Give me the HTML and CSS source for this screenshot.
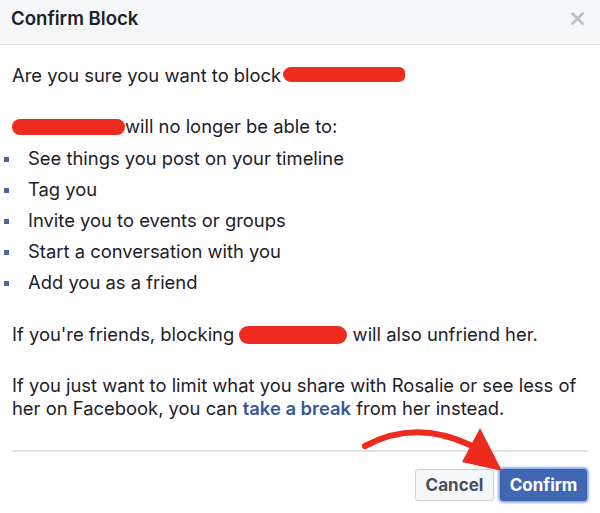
FILE: index.html
```html
<!DOCTYPE html>
<html>
<head>
<meta charset="utf-8">
<link rel="stylesheet" href="styles.css">
</head>
<body>
<div class="dialog">
  <div class="header">
    <span class="title">Confirm Block</span>
    <svg class="close" width="13" height="13" viewBox="0 0 13 13">
      <path d="M1.5 1.5 L11.5 11.5 M11.5 1.5 L1.5 11.5" stroke="#bcc0c5" stroke-width="2.6" stroke-linecap="round"/>
    </svg>
  </div>
  <div class="content">
    <p class="para">Are you sure you want to block<span class="redact r1"></span></p>
    <p class="para tight"><span class="redact r2"></span>will no longer be able to:</p>
    <ul class="list">
      <li>See things you post on your timeline</li>
      <li>Tag you</li>
      <li>Invite you to events or groups</li>
      <li>Start a conversation with you</li>
      <li>Add you as a friend</li>
    </ul>
    <p class="para">If you're friends, blocking <span class="redact r3"></span> will also unfriend her.</p>
    <p class="para">If you just want to limit what you share with Rosalie or see less of her on Facebook, you can <a class="link">take a break</a> from her instead.</p>
  </div>
  <div class="footer">
    <button class="btn cancel">Cancel</button>
    <button class="btn confirm">Confirm</button>
  </div>
  <svg class="arrow" width="160" height="80" viewBox="0 0 160 80">
    <path d="M10 46 Q 60 19 115 45" fill="none" stroke="#ec2a1e" stroke-width="6" stroke-linecap="round"/>
    <polygon points="125,28 107,62 147,71" fill="#ec2a1e"/>
  </svg>
</div>
</body>
</html>
```
FILE: styles.css
```css
html, body {
  margin: 0;
  padding: 0;
  background: #fff;
}
.dialog {
  position: relative;
  width: 600px;
  height: 513px;
  font-family: Inter, "Liberation Sans", Arial, sans-serif;
  color: #1d2129;
}
.header {
  height: 44px;
  background: #f6f7f9;
  border-bottom: 1px solid #e5e5e5;
  display: flex;
  align-items: center;
  justify-content: space-between;
  padding: 0 16px 0 11px;
}
.title {
  font-size: 18.6px;
  font-weight: 600;
  margin-top: -8px;
}
.close {
  margin-top: -8px;
}
.content {
  padding: 19px 12px 0 12px;
  font-size: 18.4px;
  line-height: 23px;
}
.para {
  margin: 0 0 28px 0;
}
.para.tight {
  margin-bottom: 5px;
}
.list {
  list-style: none;
  margin: 0 0 25px 0;
  padding: 0;
}
.list li {
  line-height: 31px;
  padding-left: 16px;
  position: relative;
}
.list li::before {
  content: "";
  position: absolute;
  left: -8px;
  top: 14px;
  width: 5px;
  height: 5px;
  background: #4a66a3;
}
.link {
  color: #365899;
  font-weight: 600;
}
.redact {
  display: inline-block;
  background: #ee2b1f;
  vertical-align: middle;
}
.r1 {
  width: 122px;
  height: 15px;
  border-radius: 10px 8px 8px 10px / 9px 6px 6px 9px;
  margin-left: 2px;
  margin-top: -4px;
}
.r2 {
  width: 113px;
  height: 16px;
  border-radius: 8px;
  margin-top: -2px;
}
.r3 {
  width: 108px;
  height: 18px;
  border-radius: 9px;
  margin-top: -2px;
}
.content .para:last-child {
  margin-bottom: 0;
}
.footer {
  margin: 30px 12px 0 12px;
  border-top: 2px solid #e2e2e2;
  padding: 17px 1px 0 0;
  display: flex;
  justify-content: flex-end;
  gap: 6px;
}
.btn {
  font-family: Inter, "Liberation Sans", Arial, sans-serif;
  font-size: 17px;
  font-weight: 700;
  height: 32px;
  border-radius: 3px;
  padding: 0;
}
.cancel {
  background: #f6f7f9;
  border: 1px solid #ced0d4;
  color: #4b4f56;
  width: 79px;
}
.confirm {
  background: #4267b2;
  border: 1px solid #3b5fa8;
  color: #fff;
  width: 87px;
  box-shadow: 0 0 2px 2px #8fb1ef;
}
.arrow {
  position: absolute;
  left: 355px;
  top: 400px;
}
```
